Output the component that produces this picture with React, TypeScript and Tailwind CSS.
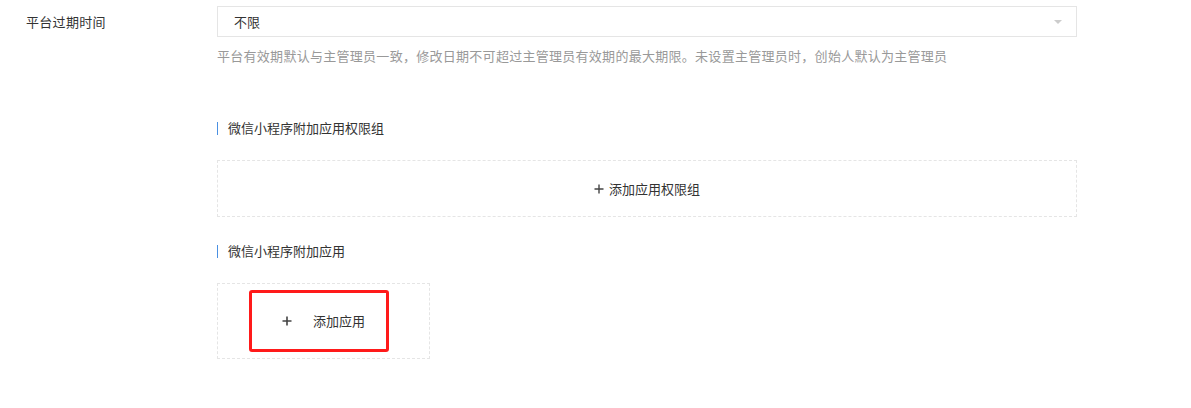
import React from 'react';

const Plus = ({ size = 10, stroke = 1.4 }: { size?: number; stroke?: number }) => (
    <svg width={size} height={size} viewBox="0 0 10 10" className="shrink-0">
        <path d="M5 0.5V9.5M0.5 5H9.5" stroke="#444" strokeWidth={stroke} />
    </svg>
);

const SectionTitle = ({ children, className }: { children: React.ReactNode; className: string }) => (
    <div className={`flex items-center h-[18px] leading-[18px] text-[#333] ${className}`}>
        <span className="w-px h-[13px] bg-[#4a90e2] mr-[10px]" />
        {children}
    </div>
);

const App = () => (
    <div className="w-[1191px] h-[408px] bg-white text-[13px] text-[#333] font-['Noto_Sans_CJK_SC',sans-serif] overflow-hidden">
        <div className="flex pt-[6px]">
            <div className="w-[217px] pl-[26px] leading-[31px] tracking-[0.3px]">平台过期时间</div>
            <div className="w-[860px]">
                <div className="h-[31px] border border-[#e5e5e5] flex items-center justify-between pl-[16px] pr-[14px]">
                    <span>不限</span>
                    <span className="w-0 h-0 border-l-[4px] border-r-[4px] border-t-[4px] border-l-transparent border-r-transparent border-t-[#cccccc]" />
                </div>
                <p className="mt-[10px] leading-[18px] text-[#999] whitespace-nowrap tracking-[0.28px]">
                    平台有效期默认与主管理员一致，修改日期不可超过主管理员有效期的最大期限。未设置主管理员时，创始人默认为主管理员
                </p>
            </div>
        </div>

        <div className="ml-[217px] w-[860px]">
            <SectionTitle className="mt-[54px]">微信小程序附加应用权限组</SectionTitle>
            <div className="mt-[23px] h-[57px] border border-dashed border-[#e5e5e5] flex items-center justify-center gap-[5px] text-[#333]">
                <Plus />
                <span>添加应用权限组</span>
            </div>

            <SectionTitle className="mt-[25px]">微信小程序附加应用</SectionTitle>
            <div className="relative mt-[23px] w-[213px] h-[76px] border border-dashed border-[#e5e5e5] flex items-center justify-center gap-[21px]">
                <Plus size={10} stroke={1.6} />
                <span>添加应用</span>
                <div className="absolute left-[31px] top-[6px] w-[140px] h-[62px] border-[3px] border-[#ff1a1a] rounded-[3px] pointer-events-none" />
            </div>
        </div>
    </div>
);

export default App;
